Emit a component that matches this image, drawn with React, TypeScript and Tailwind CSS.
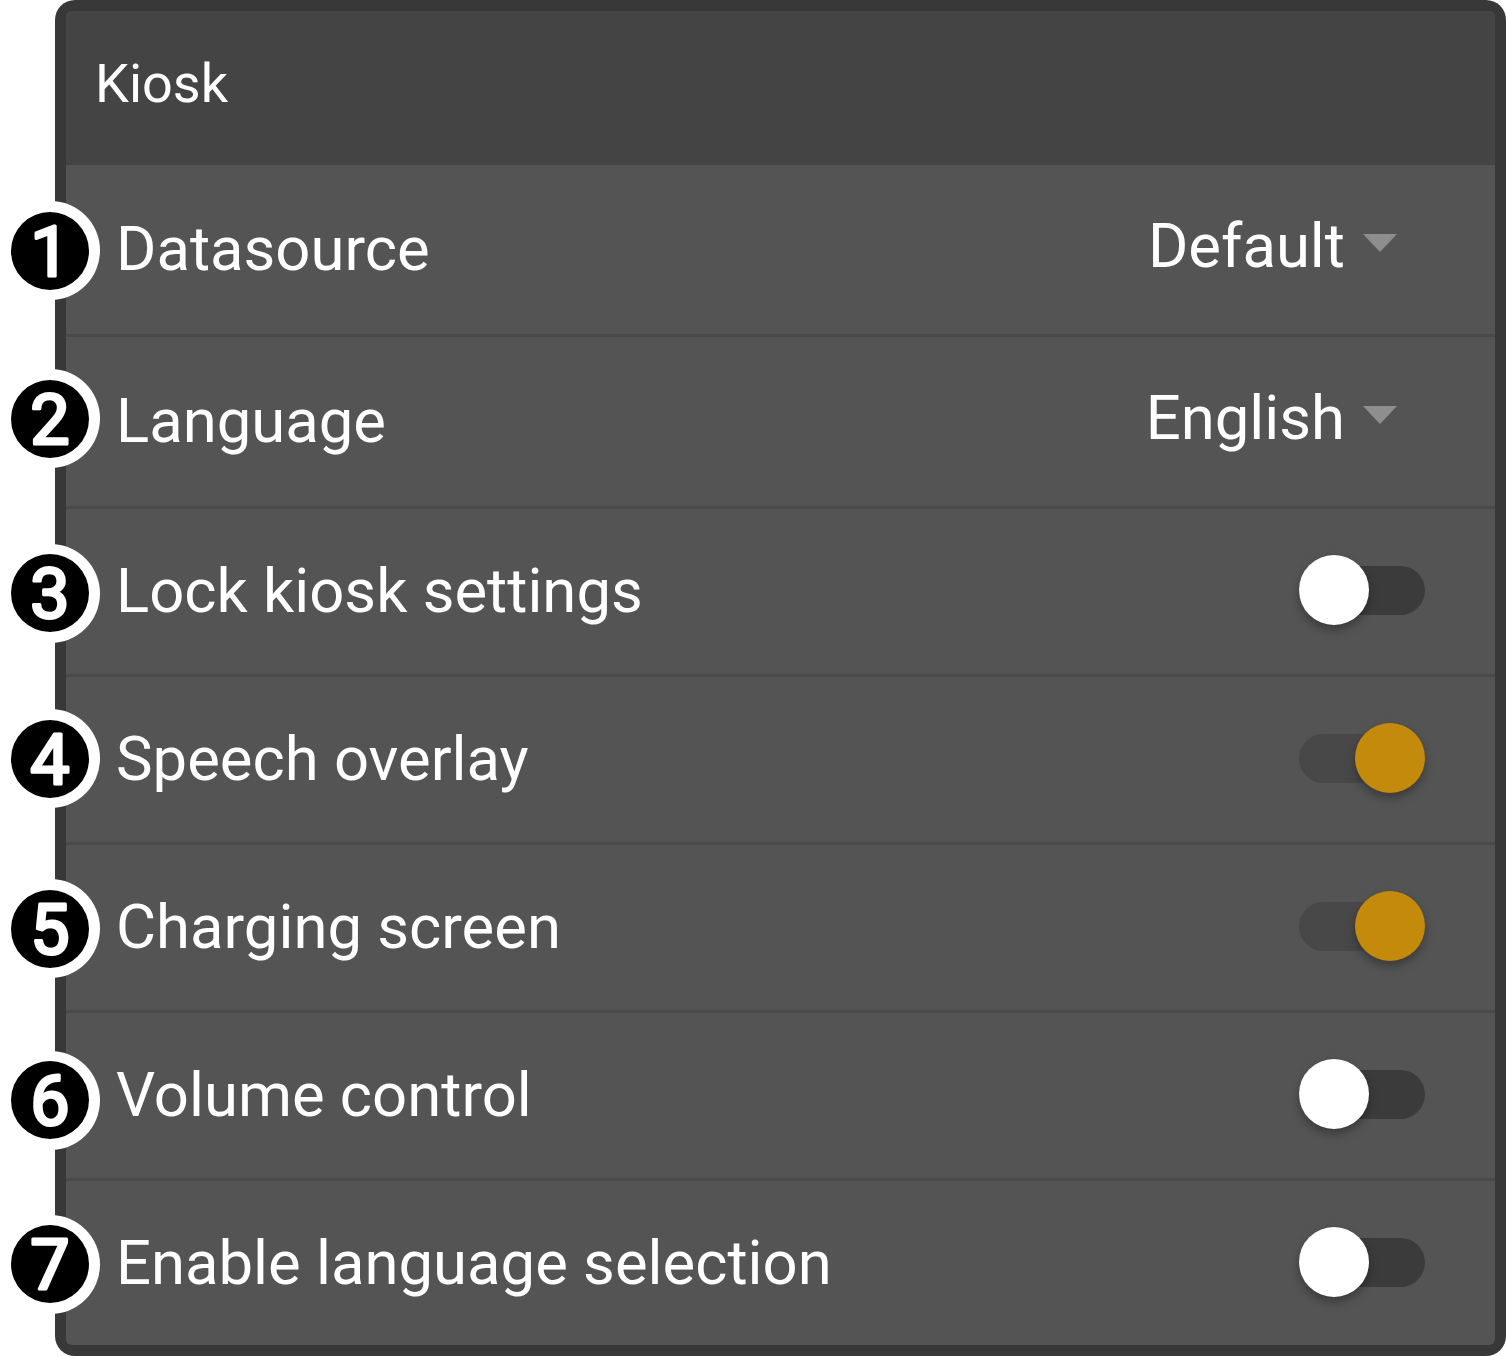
const rows = [
  { label: 'Datasource', value: 'Default', height: 'h-[172px]' },
  { label: 'Language', value: 'English', height: 'h-[172px]' },
  { label: 'Lock kiosk settings', toggle: 'off', height: 'h-[168px]' },
  { label: 'Speech overlay', toggle: 'on', height: 'h-[168px]' },
  { label: 'Charging screen', toggle: 'on', height: 'h-[168px]' },
  { label: 'Volume control', toggle: 'off', height: 'h-[168px]' },
  { label: 'Enable language selection', toggle: 'off', height: 'h-[166px]' },
]

const badges = [
  { n: 1, top: 'top-[201px]' },
  { n: 2, top: 'top-[369px]' },
  { n: 3, top: 'top-[543.5px]' },
  { n: 4, top: 'top-[709px]' },
  { n: 5, top: 'top-[879px]' },
  { n: 6, top: 'top-[1050.5px]' },
  { n: 7, top: 'top-[1214.5px]' },
]

function Toggle({ on }: { on: boolean }) {
  return (
    <div className={`relative mt-[-3px] w-[126px] h-[49px] rounded-full ${on ? 'bg-[#484848]' : 'bg-[#3b3b3b]'}`}>
      <div
        className={`absolute top-[-11px] w-[70px] h-[70px] rounded-full shadow-[0_5px_10px_rgba(0,0,0,0.3)] ${
          on ? 'right-0 bg-[#c38a0c]' : 'left-0 bg-white'
        }`}
      />
    </div>
  )
}

function Dropdown({ value }: { value: string }) {
  return (
    <div className="flex items-center pr-[28px] mt-[-6px]">
      <span className="text-[61.6px] leading-none text-white">{value}</span>
      <div className="ml-[18px] mt-[-8px] w-0 h-0 border-l-[17.5px] border-r-[17.5px] border-t-[18px] border-l-transparent border-r-transparent border-t-[#8e8e8e]" />
    </div>
  )
}

export default function App() {
  return (
    <div className="relative w-[1506px] h-[1356px] bg-white font-['Roboto',sans-serif] overflow-hidden">
      <div className="ml-[55px] w-[1451px] h-[1356px] bg-[#383838] rounded-[20px] p-[11px]">
        <div className="h-full rounded-[6px] overflow-hidden bg-[#545454]">
          <div className="h-[154px] bg-[#444444] flex items-center pl-[29px] pb-[8px]">
            <span className="text-[54px] leading-none text-white">Kiosk</span>
          </div>
          {rows.map((row, i) => (
            <div
              key={row.label}
              className={`${row.height} flex items-center justify-between pl-[50px] pr-[70px] ${
                i < rows.length - 1 ? 'border-b-[3px] border-[#4a4a4a]' : ''
              }`}
            >
              <span className="text-[61.6px] leading-none text-white">{row.label}</span>
              {row.value ? <Dropdown value={row.value} /> : <Toggle on={row.toggle === 'on'} />}
            </div>
          ))}
        </div>
      </div>
      {badges.map((b) => (
        <div
          key={b.n}
          className={`absolute left-[0.5px] ${b.top} w-[99px] h-[99px] rounded-full bg-white flex items-center justify-center`}
        >
          <svg viewBox="0 0 78 78" className="w-[78px] h-[78px] overflow-visible">
            <circle cx="39" cy="39" r="39" fill="#000" />
            <text
              x="39"
              y="64"
              textAnchor="middle"
              fontFamily="Roboto, sans-serif"
              fontWeight="400"
              fontSize="70"
              fill="#fff"
              stroke="#fff"
              strokeWidth="3"
              strokeLinejoin="round"
            >
              {b.n}
            </text>
          </svg>
        </div>
      ))}
    </div>
  )
}
